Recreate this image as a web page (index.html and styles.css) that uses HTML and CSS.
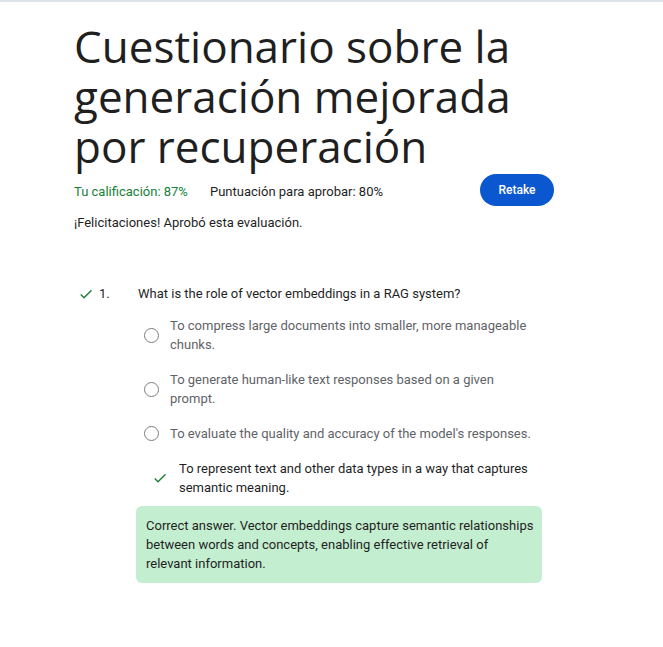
FILE: index.html
```html
<!DOCTYPE html>
<html lang="es">
<head>
<meta charset="utf-8">
<title>Cuestionario</title>
<link rel="stylesheet" href="styles.css">
</head>
<body>
<div class="topline"></div>
<main class="page">
  <h1 class="title">Cuestionario sobre la generación mejorada por recuperación</h1>
  <div class="score-row">
    <span class="grade">Tu calificación: 87%</span>
    <span class="pass">Puntuación para aprobar: 80%</span>
    <button class="retake">Retake</button>
  </div>
  <p class="congrats">¡Felicitaciones! Aprobó esta evaluación.</p>

  <section class="question">
    <div class="q-head">
      <svg class="q-check" viewBox="0 0 24 24" width="16" height="16"><path d="M9 16.2 4.8 12l-1.4 1.4L9 19 21 7l-1.4-1.4z" fill="#188038"/></svg>
      <span class="q-num">1.</span>
      <span class="q-text">What is the role of vector embeddings in a RAG system?</span>
    </div>
    <ul class="options">
      <li class="option"><span class="radio"></span><span class="opt-text">To compress large documents into smaller, more manageable chunks.</span></li>
      <li class="option"><span class="radio"></span><span class="opt-text">To generate human-like text responses based on a given prompt.</span></li>
      <li class="option"><span class="radio"></span><span class="opt-text">To evaluate the quality and accuracy of the model's responses.</span></li>
      <li class="option correct"><svg class="opt-check" viewBox="0 0 24 24" width="16" height="16"><path d="M9 16.2 4.8 12l-1.4 1.4L9 19 21 7l-1.4-1.4z" fill="#188038"/></svg><span class="opt-text">To represent text and other data types in a way that captures semantic meaning.</span></li>
    </ul>
    <div class="feedback">Correct answer. Vector embeddings capture semantic relationships between words and concepts, enabling effective retrieval of relevant information.</div>
  </section>
</main>
</body>
</html>
```
FILE: styles.css
```css
html, body {
  margin: 0;
  padding: 0;
  background: #ffffff;
}
body {
  font-family: Roboto, "Liberation Sans", sans-serif;
  color: #1f1f1f;
}
.topline {
  height: 2px;
  background: #dde3ea;
}
.page {
  padding: 0 0 0 74px;
  width: 480px;
}
.title {
  margin: 19px 0 0 0;
  font-family: "Open Sans", sans-serif;
  font-weight: 400;
  font-size: 44px;
  line-height: 50px;
  color: #1f1f1f;
  letter-spacing: 0;
}
.score-row {
  display: flex;
  align-items: center;
  margin-top: 4px;
  height: 32px;
  font-size: 13px;
}
.grade {
  color: #188038;
  width: 136px;
}
.pass {
  color: #1f1f1f;
  flex: 1;
}
.retake {
  width: 74px;
  height: 32px;
  border: none;
  border-radius: 16px;
  background: #0b57d0;
  color: #ffffff;
  font-family: Roboto, sans-serif;
  font-size: 12px;
  font-weight: 500;
  padding: 0;
  margin-top: -2px;
}
.congrats {
  margin: 6px 0 0 0;
  font-size: 13px;
  line-height: 20px;
}
.question {
  margin-top: 51px;
}
.q-head {
  display: flex;
  align-items: center;
  font-size: 13px;
  line-height: 20px;
  padding-left: 4px;
}
.q-check {
  width: 16px;
  height: 16px;
}
.q-num {
  margin-left: 5px;
  width: 39px;
}
.options {
  list-style: none;
  margin: 12px 0 0 0;
  padding: 0 0 0 70px;
  width: 390px;
}
.option {
  display: flex;
  align-items: center;
  gap: 11px;
  font-size: 13px;
  line-height: 19px;
  color: #5f6368;
  margin-bottom: 16px;
}
.radio {
  flex: none;
  width: 13px;
  height: 13px;
  border: 1.5px solid #7a7d80;
  border-radius: 50%;
}
.option.correct {
  color: #1f1f1f;
  padding-left: 8px;
  margin-bottom: 0;
}
.opt-check {
  flex: none;
}
.feedback {
  margin: 9px 0 0 62px;
  width: 391px;
  background: #c4eed0;
  border-radius: 6px;
  padding: 10px 5px 10px 10px;
  font-size: 13px;
  line-height: 19px;
  color: #1f1f1f;
}
```
